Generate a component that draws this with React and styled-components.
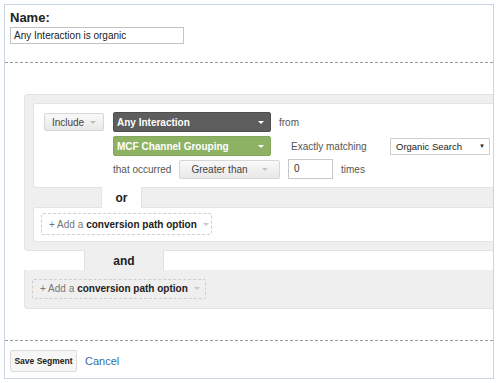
import React from "react";
import styled, { createGlobalStyle } from "styled-components";

const Global = createGlobalStyle`
  body {
    margin: 0;
    background: #ffffff;
    font-family: "Liberation Sans", Arial, sans-serif;
  }
`;

const Frame = styled.div`
  margin: 4px 0 0 4px;
  width: 488px;
  border: 1px solid #c9d5e2;
  background: #fff;
  white-space: nowrap;
`;

const Header = styled.div`
  padding: 5px 5px 18px;
  border-bottom: 1px dashed #9a9a9a;
`;

const Label = styled.div`
  font-size: 13px;
  line-height: 16px;
  font-weight: bold;
  color: #222;
`;

const NameInput = styled.div`
  margin-top: 1px;
  width: 169px;
  height: 15px;
  border: 1px solid #c4c4c4;
  font-size: 10px;
  line-height: 15px;
  padding-left: 3px;
  color: #222;
`;

const Body = styled.div`
  padding: 31px 0 31px 19px;
  border-bottom: 1px dashed #9a9a9a;
`;

const GrayBox = styled.div`
  background: #efefef;
  border: 1px solid #e2e2e2;
  border-right: none;
  border-radius: ${({ $top }) => ($top ? "4px 0 0 4px" : "0 0 0 4px")};
  padding: ${({ $pad }) => $pad};
  ${({ $top }) => !$top && "border-top: none;"}
`;

const WhiteBox = styled.div`
  background: #fff;
  border: 1px solid #e4e4e4;
  border-right: none;
  border-radius: 3px 0 0 3px;
  padding: ${({ $pad }) => $pad};
`;

const Tab = styled.div`
  width: ${({ $w }) => $w}px;
  height: ${({ $h }) => $h}px;
  margin-left: ${({ $left }) => $left}px;
  margin-top: -1px;
  margin-bottom: -1px;
  position: relative;
  z-index: 1;
  background: ${({ $bg }) => $bg};
  border-left: 1px solid ${({ $line }) => $line};
  border-right: 1px solid ${({ $line }) => $line};
  display: flex;
  align-items: center;
  justify-content: center;
  font-size: 12px;
  font-weight: bold;
  color: #222;
`;

const Rule = styled.div`
  display: flex;
  align-items: flex-start;
`;

const Column = styled.div`
  margin-left: 9px;
  display: flex;
  flex-direction: column;
`;

const Row = styled.div`
  display: flex;
  align-items: center;
  margin-top: ${({ $mt }) => $mt || 0}px;
`;

const Caret = styled.span`
  width: 0;
  height: 0;
  border-left: 3px solid transparent;
  border-right: 3px solid transparent;
  border-top: 3px solid ${({ $c }) => $c};
  margin-left: ${({ $ml }) => $ml || 0}px;
`;

const GrayButton = styled.div`
  box-sizing: border-box;
  width: ${({ $w }) => $w}px;
  height: ${({ $h }) => $h}px;
  margin-top: ${({ $mt }) => $mt || 0}px;
  border: 1px solid #d6d6d6;
  border-radius: 2px;
  background: linear-gradient(#f9f9f9, #e8e8e8);
  display: flex;
  align-items: center;
  justify-content: center;
  font-size: 10px;
  color: #444;
`;

const ColorSelect = styled.div`
  box-sizing: border-box;
  width: 158px;
  height: 20px;
  border-radius: 2px;
  background: ${({ $bg }) => $bg};
  border: 1px solid ${({ $bd }) => $bd};
  display: flex;
  align-items: center;
  justify-content: space-between;
  padding: 0 6px 0 3px;
  font-size: 10px;
  font-weight: bold;
  color: #fff;
`;

const Text = styled.span`
  font-size: 10px;
  color: #555;
  width: ${({ $w }) => ($w ? `${$w}px` : "auto")};
  margin-left: ${({ $ml }) => $ml || 0}px;
  flex-shrink: 0;
`;

const NativeSelect = styled.div`
  box-sizing: border-box;
  width: 100px;
  height: 17px;
  border: 1px solid #cfcfcf;
  display: flex;
  align-items: center;
  justify-content: space-between;
  padding: 0 4px 0 5px;
  font-size: 9.5px;
  color: #222;
`;

const SmallTri = styled.span`
  font-size: 6px;
  color: #222;
`;

const CountInput = styled.div`
  box-sizing: border-box;
  width: 45px;
  height: 20px;
  margin-left: 8px;
  border: 1px solid #c8c8c8;
  font-size: 10px;
  line-height: 18px;
  padding-left: 5px;
  color: #333;
`;

const AddButton = styled.div`
  box-sizing: border-box;
  display: inline-flex;
  align-items: center;
  width: ${({ $w }) => $w}px;
  height: ${({ $h }) => $h}px;
  border: 1px dashed #cfcfcf;
  border-radius: 2px;
  padding-left: 7px;
  font-size: 10px;
  color: #777;

  b {
    color: #222;
    margin-left: 3px;
  }
`;

const Footer = styled.div`
  padding: 9px 5px 6px;
  display: flex;
  align-items: center;
`;

const SaveButton = styled.div`
  box-sizing: border-box;
  width: 67px;
  height: 22px;
  border: 1px solid #dcdcdc;
  border-radius: 2px;
  background: #f6f6f6;
  display: flex;
  align-items: center;
  justify-content: center;
  font-size: 8.5px;
  font-weight: bold;
  color: #222;
`;

const CancelLink = styled.span`
  margin-left: 8px;
  font-size: 11px;
  color: #3a6c9e;
`;

const AddOption = ({ w, h }) => (
  <AddButton $w={w} $h={h}>
    + Add a <b>conversion path option</b>
    <Caret $c="#c8c8c8" $ml={6} />
  </AddButton>
);

export default function App() {
  return (
    <>
      <Global />
      <Frame>
        <Header>
          <Label>Name:</Label>
          <NameInput>Any Interaction is organic</NameInput>
        </Header>
        <Body>
          <GrayBox $top $pad="8px 0 8px 8px">
            <WhiteBox $pad="8px 0 8px 10px">
              <Rule>
                <GrayButton $w={60} $h={18} $mt={1}>
                  Include
                  <Caret $c="#bdbdbd" $ml={6} />
                </GrayButton>
                <Column>
                  <Row>
                    <ColorSelect $bg="#5d5d5d" $bd="#4d4d4d">
                      Any Interaction
                      <Caret $c="#fff" />
                    </ColorSelect>
                    <Text $ml={8}>from</Text>
                  </Row>
                  <Row $mt={4}>
                    <ColorSelect $bg="#8db264" $bd="#83a85b">
                      MCF Channel Grouping
                      <Caret $c="#fff" />
                    </ColorSelect>
                    <Text $ml={20} $w={99}>
                      Exactly matching
                    </Text>
                    <NativeSelect>
                      Organic Search
                      <SmallTri>▼</SmallTri>
                    </NativeSelect>
                  </Row>
                  <Row $mt={3}>
                    <Text $w={66}>that occurred</Text>
                    <GrayButton $w={101} $h={19}>
                      Greater than
                      <Caret $c="#c4c4c4" $ml={14} />
                    </GrayButton>
                    <CountInput>0</CountInput>
                    <Text $ml={8}>times</Text>
                  </Row>
                </Column>
              </Rule>
            </WhiteBox>
            <Tab $w={39} $h={21} $left={68} $bg="#fff" $line="#e4e4e4">
              or
            </Tab>
            <WhiteBox $pad="5px 0 6px 7px">
              <AddOption w={171} h={22} />
            </WhiteBox>
          </GrayBox>
          <Tab $w={78} $h={21} $left={60} $bg="#efefef" $line="#e2e2e2">
            and
          </Tab>
          <GrayBox $pad="8px 0 9px 7px">
            <AddOption w={174} h={20} />
          </GrayBox>
        </Body>
        <Footer>
          <SaveButton>Save Segment</SaveButton>
          <CancelLink>Cancel</CancelLink>
        </Footer>
      </Frame>
    </>
  );
}
